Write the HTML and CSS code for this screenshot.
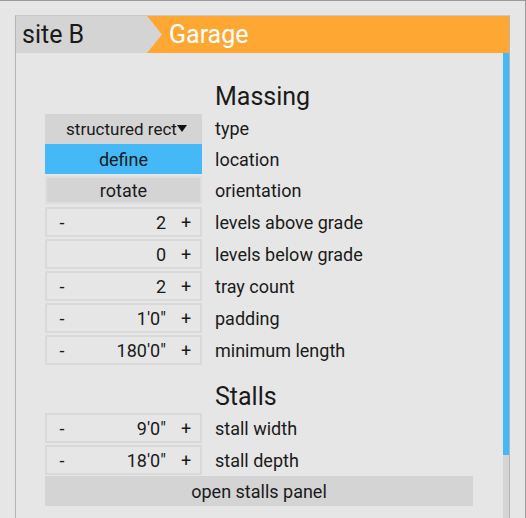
FILE: index.html
```html
<!DOCTYPE html>
<html>
<head>
<meta charset="utf-8">
<link rel="stylesheet" href="styles.css">
</head>
<body>
<div class="frame">
  <div class="panel">
    <div class="header">
      <div class="tab">site B</div>
      <div class="title">Garage</div>
    </div>
    <div class="body">
      <div class="content">
        <div class="heading">Massing</div>
        <div class="row r-type">
          <div class="ctl select">structured rect<span class="caret"></span></div>
          <div class="label">type</div>
        </div>
        <div class="row r-define">
          <div class="ctl define">define</div>
          <div class="label">location</div>
        </div>
        <div class="row r-rotate">
          <div class="ctl rotate">rotate</div>
          <div class="label">orientation</div>
        </div>
        <div class="row r-step">
          <div class="ctl stepper"><span class="minus">-</span><span class="val">2</span><span class="plus">+</span></div>
          <div class="label">levels above grade</div>
        </div>
        <div class="row r-step">
          <div class="ctl stepper"><span class="minus hidden">-</span><span class="val">0</span><span class="plus">+</span></div>
          <div class="label">levels below grade</div>
        </div>
        <div class="row r-step">
          <div class="ctl stepper"><span class="minus">-</span><span class="val">2</span><span class="plus">+</span></div>
          <div class="label">tray count</div>
        </div>
        <div class="row r-step">
          <div class="ctl stepper"><span class="minus">-</span><span class="val">1'0"</span><span class="plus">+</span></div>
          <div class="label">padding</div>
        </div>
        <div class="row r-step">
          <div class="ctl stepper"><span class="minus">-</span><span class="val">180'0"</span><span class="plus">+</span></div>
          <div class="label">minimum length</div>
        </div>
        <div class="heading h-stalls">Stalls</div>
        <div class="row r-step">
          <div class="ctl stepper"><span class="minus">-</span><span class="val">9'0"</span><span class="plus">+</span></div>
          <div class="label">stall width</div>
        </div>
        <div class="row r-step">
          <div class="ctl stepper"><span class="minus">-</span><span class="val">18'0"</span><span class="plus">+</span></div>
          <div class="label">stall depth</div>
        </div>
        <div class="wide">open stalls panel</div>
      </div>
      <div class="scrollbar">
        <div class="thumb"></div>
        <div class="track"></div>
      </div>
    </div>
  </div>
</div>
</body>
</html>
```
FILE: styles.css
```css
html, body {
  margin: 0;
  padding: 0;
  height: 100%;
  overflow: hidden;
}
body {
  background: #e6e6e6;
  font-family: Roboto, "Liberation Sans", sans-serif;
  color: #1a1a1a;
}
.frame {
  height: 100%;
  border-top: 1px solid #9c9c9c;
  border-right: 1px solid #9c9c9c;
  box-sizing: border-box;
  padding: 14px 0 0 15px;
}
.panel {
  width: 495px;
  height: 600px;
  box-sizing: border-box;
  border-top: 1px solid #c9c9c9;
  border-left: 1px solid #b5b5b5;
  border-right: 1px solid #b5b5b5;
  display: flex;
  flex-direction: column;
}
.header {
  height: 37px;
  background: #ffa733;
  display: flex;
  align-items: center;
  font-size: 25px;
  flex: none;
}
.tab {
  width: 146px;
  height: 100%;
  background: #d4d4d4;
  padding-left: 6px;
  box-sizing: border-box;
  display: flex;
  align-items: center;
  clip-path: polygon(0 0, 131px 0, 146px 50%, 131px 100%, 0 100%);
}
.title {
  color: #ffffff;
  margin-left: 7px;
}
.body {
  flex: 1;
  display: flex;
}
.content {
  flex: 1;
  padding: 29px 0 0 29px;
  font-size: 18px;
}
.heading {
  height: 30px;
  line-height: 30px;
  font-size: 25px;
  margin-left: 170px;
}
.h-stalls {
  margin-top: 16px;
}
.row {
  display: flex;
  align-items: center;
  height: 32px;
}
.r-define {
  height: 30px;
}
.ctl {
  width: 157px;
  box-sizing: border-box;
  flex: none;
}
.label {
  margin-left: 13px;
}
.select {
  height: 30px;
  margin-top: 2px;
  background: #d4d4d4;
  display: flex;
  align-items: center;
  justify-content: center;
  font-size: 17px;
  padding-left: 6px;
}
.caret {
  display: inline-block;
  width: 0;
  height: 0;
  border-left: 5px solid transparent;
  border-right: 5px solid transparent;
  border-top: 7px solid #111;
  margin-left: 0;
  margin-bottom: 1px;
}
.define {
  height: 30px;
  background: #45b8f7;
  display: flex;
  align-items: center;
  justify-content: center;
}
.rotate {
  height: 28px;
  background: #d4d4d4;
  border: 2px solid #dedede;
  display: flex;
  align-items: center;
  justify-content: center;
}
.stepper {
  height: 30px;
  border: 2px solid #d9d9d9;
  display: flex;
  align-items: center;
}
.minus {
  width: 30px;
  text-align: center;
}
.hidden {
  visibility: hidden;
}
.val {
  flex: 1;
  text-align: right;
  padding-right: 6px;
}
.plus {
  width: 28px;
  text-align: center;
}
.wide {
  width: 428px;
  height: 30px;
  background: #d4d4d4;
  display: flex;
  align-items: center;
  justify-content: center;
}
.scrollbar {
  width: 6px;
  display: flex;
  flex-direction: column;
  flex: none;
}
.thumb {
  height: 402px;
  background: #45b8f7;
}
.track {
  flex: 1;
  background: #d4d4d4;
}
```
